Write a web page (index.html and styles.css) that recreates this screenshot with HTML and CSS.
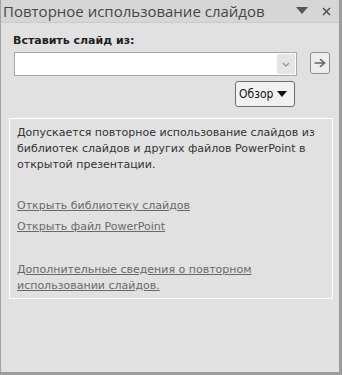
FILE: index.html
```html
<!DOCTYPE html>
<html lang="ru">
<head>
<meta charset="utf-8">
<link rel="stylesheet" href="styles.css">
</head>
<body>
<div class="panel">
  <div class="titlebar">
    <span class="title">Повторное использование слайдов</span>
    <span class="tb-icons">
      <svg class="tb-drop" width="12" height="8" viewBox="0 0 12 8"><path d="M0 0H12L6 7Z" fill="#555"/></svg>
      <svg class="tb-close" width="9" height="9" viewBox="0 0 9 9"><path d="M1 1L8 8M8 1L1 8" stroke="#555" stroke-width="1.6"/></svg>
    </span>
  </div>
  <div class="content">
    <div class="label">Вставить слайд из:</div>
    <div class="row">
      <div class="combo">
        <div class="combo-btn">
          <svg width="8" height="5" viewBox="0 0 8 5"><path d="M1 1L4 4L7 1" stroke="#9a9a9a" stroke-width="1.4" fill="none"/></svg>
        </div>
      </div>
      <div class="go-btn">
        <svg width="12" height="10" viewBox="0 0 12 10"><path d="M0.5 5H10M6 1L10.5 5L6 9" stroke="#666" stroke-width="1.6" fill="none"/></svg>
      </div>
    </div>
    <div class="browse-row">
      <div class="browse">Обзор
        <svg width="10" height="6" viewBox="0 0 10 6"><path d="M0 0H10L5 6Z" fill="#111"/></svg>
      </div>
    </div>
    <div class="info">
      <p class="desc">Допускается повторное использование слайдов из библиотек слайдов и других файлов PowerPoint в открытой презентации.</p>
      <a class="link first">Открыть библиотеку слайдов</a>
      <a class="link second">Открыть файл PowerPoint</a>
      <a class="link more">Дополнительные сведения о повторном использовании слайдов.</a>
    </div>
  </div>
</div>
</body>
</html>
```
FILE: styles.css
```css
html, body {
  margin: 0;
  padding: 0;
}
body {
  width: 342px;
  height: 375px;
  overflow: hidden;
  font-family: "DejaVu Sans", sans-serif;
}
.panel {
  box-sizing: border-box;
  width: 342px;
  height: 375px;
  background: #e1e1e2;
  border-left: 1px solid #a3a3a3;
  border-right: 3px solid #9d9d9d;
  border-bottom: 3px solid #9d9d9d;
  display: flex;
  flex-direction: column;
}
.titlebar {
  height: 22px;
  background: #d6d6d7;
  border-bottom: 1px solid #cbcbcc;
  display: flex;
  align-items: center;
  justify-content: space-between;
  padding-left: 2px;
  padding-right: 8px;
}
.title {
  font-family: "Open Sans", sans-serif;
  font-size: 15px;
  color: #474747;
}
.tb-icons {
  display: flex;
  align-items: center;
  gap: 14px;
}
.content {
  padding: 11px 0 0 12px;
}
.label {
  font-size: 11px;
  font-weight: bold;
  color: #222;
  line-height: 14px;
}
.row {
  display: flex;
  align-items: flex-start;
  margin-top: 4px;
}
.combo {
  box-sizing: border-box;
  margin-left: 1px;
  width: 283px;
  height: 24px;
  background: #fff;
  border: 1px solid #a9a9a9;
  display: flex;
  justify-content: flex-end;
  padding: 1px;
}
.combo-btn {
  width: 18px;
  height: 20px;
  background: #e5e5e5;
  display: flex;
  align-items: center;
  justify-content: center;
}
.go-btn {
  box-sizing: border-box;
  margin-left: 13px;
  width: 20px;
  height: 22px;
  border: 1px solid #8f8f8f;
  border-radius: 3px;
  background: #ededed;
  display: flex;
  align-items: center;
  justify-content: center;
}
.browse-row {
  display: flex;
  justify-content: flex-end;
  padding-right: 44px;
  margin-top: 5px;
}
.browse {
  box-sizing: border-box;
  width: 60px;
  height: 26px;
  border: 1px solid #6e6e6e;
  border-radius: 3px;
  background: #f1f1f1;
  font-family: "DejaVu Sans Condensed", "DejaVu Sans", sans-serif;
  font-size: 12px;
  color: #111;
  display: flex;
  align-items: center;
  gap: 4px;
  padding-left: 3px;
}
.info {
  box-sizing: border-box;
  margin-top: 11px;
  margin-left: -4px;
  width: 324px;
  height: 181px;
  border: 1px solid #ffffff;
  padding: 6px 8px 0 7px;
  display: flex;
  flex-direction: column;
  align-items: flex-start;
}
.desc {
  margin: 0;
  font-size: 11px;
  line-height: 16px;
  color: #333;
}
.link {
  font-size: 11px;
  line-height: 16px;
  color: #6a6a6a;
  text-decoration: underline;
}
.link.first {
  margin-top: 25px;
}
.link.second {
  margin-top: 5px;
}
.link.more {
  margin-top: 27px;
  width: 250px;
}
```
